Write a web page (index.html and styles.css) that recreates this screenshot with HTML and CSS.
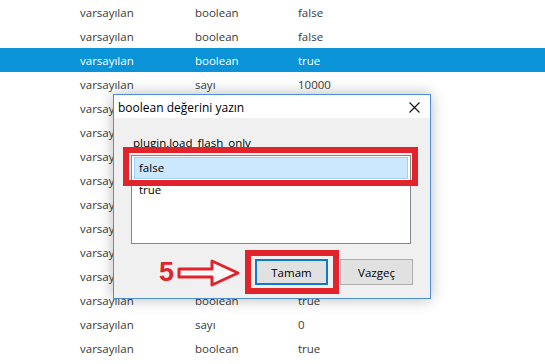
FILE: index.html
```html
<!DOCTYPE html>
<html lang="tr">
<head>
    <meta charset="UTF-8">
    <title>about:config - boolean</title>
    <link rel="stylesheet" href="styles.css">
</head>
<body>
    <!-- Preferences list -->
    <div class="pref-list">
        <div class="pref-row"><span class="col-state">varsayılan</span><span class="col-type">boolean</span><span class="col-value">false</span></div>
        <div class="pref-row"><span class="col-state">varsayılan</span><span class="col-type">boolean</span><span class="col-value">false</span></div>
        <div class="pref-row selected"><span class="col-state">varsayılan</span><span class="col-type">boolean</span><span class="col-value">true</span></div>
        <div class="pref-row"><span class="col-state">varsayılan</span><span class="col-type">sayı</span><span class="col-value">10000</span></div>
        <div class="pref-row"><span class="col-state">varsayılan</span><span class="col-type">boolean</span><span class="col-value">false</span></div>
        <div class="pref-row"><span class="col-state">varsayılan</span><span class="col-type">boolean</span><span class="col-value">true</span></div>
        <div class="pref-row"><span class="col-state">varsayılan</span><span class="col-type">boolean</span><span class="col-value">false</span></div>
        <div class="pref-row"><span class="col-state">varsayılan</span><span class="col-type">sayı</span><span class="col-value">3</span></div>
        <div class="pref-row"><span class="col-state">varsayılan</span><span class="col-type">boolean</span><span class="col-value">true</span></div>
        <div class="pref-row"><span class="col-state">varsayılan</span><span class="col-type">boolean</span><span class="col-value">false</span></div>
        <div class="pref-row"><span class="col-state">varsayılan</span><span class="col-type">dizge</span><span class="col-value"></span></div>
        <div class="pref-row"><span class="col-state">varsayılan</span><span class="col-type">boolean</span><span class="col-value">true</span></div>
        <div class="pref-row"><span class="col-state">varsayılan</span><span class="col-type">boolean</span><span class="col-value">true</span></div>
        <div class="pref-row"><span class="col-state">varsayılan</span><span class="col-type">sayı</span><span class="col-value">0</span></div>
        <div class="pref-row"><span class="col-state">varsayılan</span><span class="col-type">boolean</span><span class="col-value">true</span></div>
    </div>

    <!-- Edit dialog -->
    <div class="dialog">
        <div class="dialog-title">
            <span>boolean değerini yazın</span>
            <svg class="close-icon" width="11" height="11" viewBox="0 0 11 11">
                <path d="M0.5 0.5 L10.5 10.5 M10.5 0.5 L0.5 10.5" stroke="#111" stroke-width="1.1" fill="none"/>
            </svg>
        </div>
        <div class="dialog-body">
            <div class="pref-name">plugin.load_flash_only</div>
            <div class="listbox">
                <div class="list-item active">false</div>
                <div class="list-item">true</div>
            </div>
            <div class="dialog-buttons">
                <button class="win-btn default">Tamam</button>
                <button class="win-btn">Vazgeç</button>
            </div>
        </div>

        <!-- tutorial marks -->
        <div class="mark mark-list"></div>
        <div class="mark mark-ok"></div>
        <div class="step-num">5</div>
        <svg class="step-arrow" width="64" height="28" viewBox="0 0 64 28">
            <polygon points="2,10 35,10 35,2 61,14 35,26 35,18 2,18" fill="#fafafa" stroke="#e1232b" stroke-width="3" stroke-linejoin="round"/>
        </svg>
    </div>
</body>
</html>
```

FILE: styles.css
```css
* {
    margin: 0;
    padding: 0;
    box-sizing: border-box;
}

body {
    background-color: #fff;
    font-family: 'Open Sans', 'Noto Sans', sans-serif;
    font-size: 11.5px;
    color: #3a3a3a;
    position: relative;
    overflow: hidden;
}

.pref-list {
    display: flex;
    flex-direction: column;
}

.pref-row {
    display: flex;
    height: 24px;
    align-items: center;
    padding-left: 80px;
}

.pref-row.selected {
    background-color: #0a93d6;
    color: #fff;
}

.col-state {
    width: 115px;
}

.col-type {
    width: 103px;
}

/* dialog */
.dialog {
    position: absolute;
    left: 113px;
    top: 94px;
    width: 318px;
    height: 205px;
    border: 1px solid #4f8fd3;
    background-color: #f0f0f0;
    box-shadow: 0 0 14px rgba(0,0,0,0.28);
    display: flex;
    flex-direction: column;
    color: #000;
}

.dialog-title {
    height: 23px;
    background-color: #fff;
    display: flex;
    align-items: center;
    justify-content: space-between;
    padding: 2px 10px 0 4px;
    font-size: 12px;
}

.dialog-body {
    flex: 1;
    padding: 17px 19px 0 17px;
    display: flex;
    flex-direction: column;
}

.pref-name {
    height: 16px;
    line-height: 16px;
    padding-left: 2px;
    margin-bottom: 4px;
    font-size: 11.5px;
}

.listbox {
    height: 89px;
    background-color: #fff;
    border: 1px solid #828790;
    padding: 1px 2px;
    font-size: 11.5px;
}

.list-item {
    height: 22px;
    line-height: 20px;
    padding-left: 4px;
    border: 1px solid transparent;
}

.list-item.active {
    background-color: #cce8ff;
    border-color: #99d1ff;
}

.dialog-buttons {
    display: flex;
    justify-content: flex-end;
    gap: 12px;
    margin-top: 15px;
    margin-right: -2px;
}

.win-btn {
    width: 73px;
    height: 26px;
    background-color: #e1e1e1;
    border: 1px solid #adadad;
    font-family: inherit;
    font-size: 11.5px;
    color: #000;
}

.win-btn.default {
    border: 2px solid #0f78cf;
}

/* red tutorial annotations */
.mark {
    position: absolute;
    border: 6px solid #e1232b;
}

.mark-list {
    left: 9px;
    top: 52px;
    width: 295px;
    height: 39px;
}

.mark-ok {
    left: 131px;
    top: 155px;
    width: 94px;
    height: 44px;
}

.step-num {
    position: absolute;
    left: 45px;
    top: 162px;
    font-family: 'Liberation Sans', sans-serif;
    font-weight: bold;
    font-size: 27px;
    color: #e1232b;
}

.step-arrow {
    position: absolute;
    left: 63px;
    top: 164px;
}
```
